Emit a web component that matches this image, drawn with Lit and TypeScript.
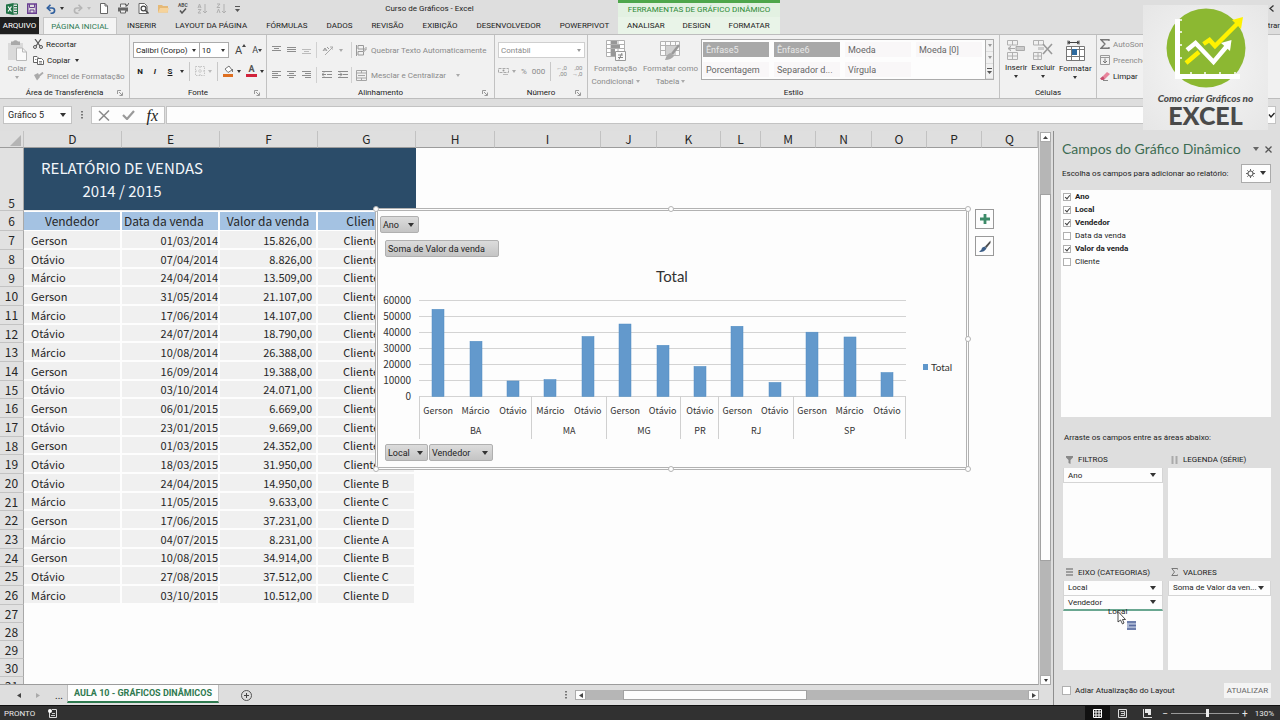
import { LitElement, html, svg, css, nothing } from "lit";
import { customElement } from "lit/decorators.js";
import { classMap } from "lit/directives/class-map.js";

const sellers = "Gerson Otávio Márcio Gerson Márcio Otávio Márcio Gerson Otávio Gerson Otávio Gerson Otávio Otávio Márcio Gerson Márcio Gerson Otávio Márcio".split(" ");
const dates = "01/03/2014 07/04/2014 24/04/2014 31/05/2014 17/06/2014 24/07/2014 10/08/2014 16/09/2014 03/10/2014 06/01/2015 23/01/2015 01/03/2015 18/03/2015 24/04/2015 11/05/2015 17/06/2015 04/07/2015 10/08/2015 27/08/2015 03/10/2015".split(" ");
const amounts = "15.826,00 8.826,00 13.509,00 21.107,00 14.107,00 18.790,00 26.388,00 19.388,00 24.071,00 6.669,00 9.669,00 24.352,00 31.950,00 14.950,00 9.633,00 37.231,00 8.231,00 34.914,00 37.512,00 10.512,00".split(" ");
const clients = "ABCDABCDABCDABCDABCD".split("");
clients.splice(12, 8, "A", "B", "C", "D", "A", "B", "C", "D");

const emptyRows = [27, 28, 29, 30, 31];
const columns = "DEFGHIJKLMNOPQ".split("");

const regions: [string, [string, number][]][] = [
  ["BA", [["Gerson", 54500], ["Márcio", 34500], ["Otávio", 9700]]],
  ["MA", [["Márcio", 10600], ["Otávio", 37500]]],
  ["MG", [["Gerson", 45300], ["Otávio", 32000]]],
  ["PR", [["Otávio", 18800]]],
  ["RJ", [["Gerson", 43900], ["Otávio", 8800]]],
  ["SP", [["Gerson", 40200], ["Márcio", 37200], ["Otávio", 15000]]],
];

const line = (y: number, a: number, b: number, c = "#8d8d8d") => svg`<path d="M${a} ${y}.5H${b}" stroke=${c}/>`;

const icon = (w: number, h: number, body: unknown) =>
  html`<svg class="ico" width=${w} height=${h} viewBox="0 0 ${w} ${h}" fill="none" aria-hidden="true">${body}</svg>`;

const caret = (c = "#333") => icon(6, 4, svg`<path d="M0 0H6L3 4Z" fill=${c}/>`);
const smallCaret = (c = "#333") => icon(4, 3, svg`<path d="M0 0H4L2 3Z" fill=${c}/>`);
const launcher = icon(6, 6, svg`<path d="M.5 4V.5H4M2 2L5 5M5.500 2.500V5.500H2.500" stroke="#999"/>`);

const icons = {
  excel: icon(12, 12, svg`<path d="M7 1H11.500V11H7" stroke="#217346"/><path d="M8 3.500H11M8 6H11M8 8.500H11" stroke="#217346"/><path d="M0 1.500L7.500 0V12L0 10.500Z" fill="#217346"/><path d="M2 3.500L5.500 8.500M5.500 3.500L2 8.500" stroke="#fff" stroke-width="1.200"/>`),
  save: icon(10, 11, svg`<path d="M.75 1H9.250V10.250H.75Z" stroke="#6a3f92" stroke-width="1.500"/><path d="M2.500 1V4.500H7.500V1M3 10V7H7V10" stroke="#6a3f92"/>`),
  undo: icon(10, 10, svg`<path d="M1.500 4H6A2.500 2.500 0 0 1 6 9.200H4.500" stroke="#2f5f9e" stroke-width="1.600"/><path d="M4.500 .8L1.300 4L4.500 7" stroke="#2f5f9e" stroke-width="1.600"/>`),
  redo: icon(10, 10, svg`<path d="M8.500 4H4A2.500 2.500 0 0 0 4 9.200H5.500" stroke="#b5b5b5" stroke-width="1.600"/><path d="M5.500 .8L8.700 4L5.500 7" stroke="#b5b5b5" stroke-width="1.600"/>`),
  page: icon(8, 11, svg`<path d="M.5 .5H5L7.500 3V10.500H.5Z" fill="#fff" stroke="#666"/><path d="M5 .5V3H7.500" stroke="#666"/>`),
  printer: icon(12, 11, svg`<path d="M1 4.500H11V8.500H1Z" fill="#666"/><path d="M3.500 4V1H9V4M3.500 7.500V10H8.500V7.500" fill="#eee" stroke="#666"/><path d="M8 1L10 3L12 0" stroke="#555"/>`),
  preview: icon(11, 11, svg`<path d="M1 .5H6.500L9 3V10.500H1Z" fill="#fff" stroke="#666"/><circle cx="5.500" cy="5.500" r="2.400" stroke="#444" stroke-width="1.200"/><path d="M7.500 7.500L10.500 10.500" stroke="#444" stroke-width="1.400"/>`),
  folder: icon(11, 9, svg`<path d="M0 1H4L5 2H10V8.500H0Z" fill="#e5b977"/><path d="M2 4H11L9.500 8.500H0Z" fill="#f6d39b"/>`),
  spell: html`<span class="abc">ABC${icon(8, 6, svg`<path d="M1 2.500L3 5L7 .5" stroke="#555" stroke-width="1.500"/>`)}</span>`,
  sortAsc: icon(10, 11, svg`<path d="M1 5L2.500 1L4 5M1.500 4H3.500M1 6.500H4L1 10H4M8 1V10M6 8L8 10L10 8" stroke="#b0b0b0"/>`),
  sortDesc: icon(10, 11, svg`<path d="M1 1H4L1 4.500H4M1 10L2.500 6L4 10M8 1V10M6 8L8 10L10 8" stroke="#b0b0b0"/>`),
  more: icon(5, 6, svg`<path d="M0 .5H5" stroke="#555"/><path d="M0 3H5L2.500 6Z" fill="#555"/>`),
  paste: icon(20, 21, svg`<path d="M1 3H16V20H1Z" fill="#dadada"/><path d="M4 1.500H6Q8.500 -1 11 1.500H13V5H4Z" fill="#a9a9a9"/><path d="M9.500 8H15.500L19.500 12V20.500H9.500Z" fill="#fafafa" stroke="#b9b9b9"/><path d="M15.500 8V12H19.500" stroke="#b9b9b9"/>`),
  cut: icon(10, 10, svg`<path d="M2 0L7 7M8 0L3 7" stroke="#555" stroke-width="1.200"/><circle cx="2" cy="8" r="1.500" stroke="#555"/><circle cx="8" cy="8" r="1.500" stroke="#555"/>`),
  copy: icon(11, 9, svg`<path d="M.5 .5H4L5.500 2V6.500H.5Z" fill="#fff" stroke="#666"/><path d="M4.500 2.500H8.500L10.500 4.500V8.500H4.500Z" fill="#fff" stroke="#666"/><path d="M6 5.500H9M6 7H9M2 3.500H3.500" stroke="#888"/>`),
  painter: icon(11, 9, svg`<path d="M1 3L5 1L7 5L4 8.500Z" fill="#aaa"/><path d="M6 4L10 .5" stroke="#aaa" stroke-width="1.800"/>`),
  fontUp: html`<span class="fa">A${icon(4, 3, svg`<path d="M0 3L2 0L4 3Z" fill="#444"/>`)}</span>`,
  fontDown: html`<span class="fa small">A${icon(4, 3, svg`<path d="M0 0L2 3L4 0Z" fill="#444"/>`)}</span>`,
  border: icon(10, 10, svg`<path d="M.5 .5H9.500V9.500H.5ZM5 .5V9.500M.5 5H9.500" stroke="#c4c4c4" stroke-dasharray="1.500 1"/>`),
  fill: icon(11, 12, svg`<path d="M2 4L6 1L9 5L5 7.500Z" fill="#fff" stroke="#777"/><path d="M9.500 4V7" stroke="#777"/><path d="M0 9H10V12H0Z" fill="#de6f20"/>`),
  color: html`<span class="fc">A</span>`,
  top: icon(9, 8, svg`${line(0, 0, 9)}${line(2, 2, 7)}${line(4, 0, 9)}`),
  mid: icon(9, 8, svg`${line(1, 0, 9)}${line(3, 0, 9)}${line(5, 0, 9)}`),
  bot: icon(9, 8, svg`${line(3, 0, 9, "#bbb")}${line(5, 2, 7, "#bbb")}${line(7, 0, 9, "#bbb")}`),
  left: icon(9, 8, svg`${line(0, 0, 9)}${line(2, 0, 6)}${line(4, 0, 9)}${line(6, 0, 6)}`),
  center: icon(9, 8, svg`${line(0, 0, 9)}${line(2, 2, 7)}${line(4, 0, 9)}${line(6, 2, 7)}`),
  right: icon(9, 8, svg`${line(0, 0, 9)}${line(2, 3, 9)}${line(4, 0, 9)}${line(6, 3, 9)}`),
  orient: icon(11, 9, svg`<path d="M3 9L11 1M8 1H11V4" stroke="#aaa"/><path d="M1 5L3 2L5 5M2 4H4.500M5 1L7 3" stroke="#999"/>`),
  outdent: icon(10, 8, svg`${line(0, 0, 10)}${line(3, 5, 10)}${line(6, 0, 10)}<path d="M4 3.500H0M2 1.500L0 3.500L2 5.500" stroke="#888"/>`),
  indent: icon(10, 8, svg`${line(0, 0, 10)}${line(3, 5, 10)}${line(6, 0, 10)}<path d="M0 3.500H4M2 1.500L4 3.500L2 5.500" stroke="#888"/>`),
  wrap: icon(11, 11, svg`<path d="M.5 0V11M2 .5H7.500V4H2ZM2 6.500H7.500V10H2Z" stroke="#999"/><path d="M7 5H10V2M8.500 3.500L7 5L8.500 6.500" stroke="#999"/>`),
  merge: icon(11, 11, svg`<path d="M.5 .5H10.500V10.500H.5ZM.5 3H10.500M.5 8H10.500M5.500 .5V3M5.500 8V10.500M2 5.500H9" stroke="#a5a5a5"/>`),
  money: icon(11, 9, svg`<path d="M.5 1.500H10.500V5.500H.5Z" stroke="#aaa" stroke-dasharray="3 1"/><circle cx="5.500" cy="3.500" r="1" fill="#999"/><path d="M5 7.500H10" stroke="#bbb"/>`),
  condFmt: icon(20, 21, svg`<path d="M.5 .5H18.500V16.500H.5ZM.5 4.500H18.500M.5 8.500H18.500M.5 12.500H18.500M5 .5V16.500M12 .5V16.500" fill="#fff" stroke="#b0b0b0"/><path d="M5 1H11V4H5ZM5 5H14V8H5ZM5 9H9V16H5Z" fill="#979797"/><path d="M9.500 11.500H19.500V20.500H9.500Z" fill="#fafafa" stroke="#999"/><path d="M12 15H17M12 17.500H17M16 13L13 19.500" stroke="#888"/>`),
  tableFmt: icon(21, 21, svg`<path d="M.5 1.500H19.500V15.500H.5ZM.5 5.500H19.500M.5 10.500H19.500M5.500 1.500V15.500M10.500 1.500V15.500M15.500 1.500V15.500" fill="#fafafa" stroke="#b3b3b3"/><path d="M6 6H16V15H6Z" fill="#d0d0d0"/><path d="M19 5L12 14" stroke="#999" stroke-width="2.500"/><path d="M5 20Q7 13 11 13L14 16Q11 20 5 20Z" fill="#a8a8a8"/>`),
  insert: icon(18, 20, svg`<path d="M.5 .5H10.500V5H.5ZM5.500 .5V5M.5 12.500H10.500V19.500H.5ZM5.500 12.500V19.500M.5 16H10.500" stroke="#b0b0b0"/><path d="M9 6.500H17.500V10.500H9ZM8 8.500H1M4 6L1 8.500L4 11" fill="#ccc" stroke="#aaa"/>`),
  remove: icon(20, 20, svg`<path d="M.5 .5H10.500V5H.5ZM5.500 .5V5M.5 12.500H8.500V19.500H.5ZM5 12.500V19.500M.5 16H8.500" stroke="#b0b0b0"/><path d="M5 7H11V10H5Z" fill="#ccc"/><path d="M10 4L19 14M19 4L10 14" stroke="#999" stroke-width="1.600"/>`),
  format: icon(19, 21, svg`<path d="M2 2.500H13M2 .5V4.500M13 .5V4.500M4 1L2 2.500L4 4M11 1L13 2.500L11 4" stroke="#444"/><path d="M.5 6.500H18.500V20.500H.5ZM5.500 6.500V20.500M13.500 6.500V20.500M.5 9.500H18.500M.5 16.500H18.500" fill="#fff" stroke="#777"/><path d="M6 9H11V15H6Z" fill="#2d6a9f"/>`),
  sum: icon(10, 10, svg`<path d="M9 2V.75H1L5 5L1 9.250H9V8" stroke="#777" stroke-width="1.300"/>`),
  down: icon(10, 10, svg`<path d="M.5 .5H9.500V9.500H.5ZM.5 2.500H9.500" stroke="#999"/><path d="M5 3.500V8M3 6L5 8L7 6" stroke="#777"/>`),
  eraser: icon(10, 9, svg`<path d="M3 4L7 0L10 2L5 7Z" fill="#e8839b"/><path d="M3 4L5 7L3.500 8H1.500L0 6.500Z" fill="#c84d6e"/><path d="M3 8.500H8" stroke="#888"/>`),
  cancel: icon(12, 11, svg`<path d="M1 1L11 10.500M11 .5L1 10.500" stroke="#8a8a8a" stroke-width="1.500"/>`),
  accept: icon(13, 10, svg`<path d="M1 5L5 9L12 1" stroke="#9a9a9a" stroke-width="2.200"/>`),
  gear: icon(9, 9, svg`<circle cx="4.500" cy="4.500" r="2.500" stroke="#666" stroke-width="1.200"/><path d="M4.500 0V2M4.500 7V9M0 4.500H2M7 4.500H9M1.300 1.300L2.600 2.600M6.400 6.400L7.700 7.700M7.700 1.300L6.400 2.600M2.600 6.400L1.300 7.700" stroke="#666"/>`),
  funnel: icon(7, 8, svg`<path d="M0 0H7V1.500L4.500 4V8L2.500 7V4L0 1.500Z" fill="#888"/>`),
  cols: icon(7, 8, svg`<path d="M1.500 0V8M5.500 0V8" stroke="#aaa" stroke-width="2"/>`),
  rows: icon(7, 8, svg`<path d="M0 1H7M0 4H7M0 7H7" stroke="#888" stroke-width="1.500"/>`),
  sigma: icon(7, 8, svg`<path d="M6.500 1.500V.5H.8L3.500 4L.8 7.500H6.500V6.500" stroke="#777"/>`),
  plus: icon(10, 10, svg`<path d="M5 0V10M0 5H10" stroke="#3c8a68" stroke-width="2.800"/>`),
  brush: icon(12, 13, svg`<path d="M11.500 .5L6 6.500L7.500 8L11.500 3Z" fill="#4d4d4d"/><path d="M6 6.500Q2.500 7 2.500 9.500L0 12Q5 12.500 7.500 8.500Z" fill="#3b5d86"/>`),
  normal: icon(9, 9, svg`<path d="M.5 .5H8.500V8.500H.5ZM.5 3H8.500M.5 6H8.500M3 .5V8.500M6 .5V8.500" stroke="#fff"/>`),
  layout: icon(9, 9, svg`<path d="M.5 .5H8.500V8.500H.5Z" stroke="#ddd"/><path d="M2.500 2.500H6.500V6.500H2.500M3 4.500H6" stroke="#ccc"/>`),
  pageBreak: icon(9, 9, svg`<path d="M.5 0V8.500H9" stroke="#ddd"/><path d="M2 0H8V6H5V4H2Z" fill="#e8e8e8"/>`),
  record: icon(9, 9, svg`<path d="M1.500 3V8.500H8.500V.5H4" stroke="#ddd"/><path d="M4 4.500H7M3 6.500H7" stroke="#ccc"/><circle cx="2" cy="2" r="2" fill="#fff"/>`),
};

@customElement("pivot-chart")
class PivotChart extends LitElement {
  static styles = css`
    :host { display: flex; flex-direction: column; background: #fdfdfd; border: 3px double #b2b2b2; box-sizing: border-box;
      font-family: Lato, sans-serif; color: #333; }
    button { display: flex; align-items: center; justify-content: space-between; height: 17px; box-sizing: border-box; padding: 0 4px 0 2px;
      border: 1px solid #b0b0b0; border-radius: 2px; background: linear-gradient(#dcdcdc, #c4c4c4); font: 9px Roboto, sans-serif; color: #222; }
    .ano { width: 39px; margin: 5px 0 0 2px; }
    .soma { width: 114px; margin: 7px 0 0 7px; }
    h2 { margin: 7px 0 0; font-size: 15px; line-height: 24px; font-weight: 400; text-align: center; }
    .body { display: flex; align-items: center; margin: 5px 0 0 1px; }
    .legend { display: flex; align-items: center; gap: 3px; margin-left: 12px; font-size: 10px; }
    .swatch { width: 5px; height: 6px; background: #5f97cb; }
    .foot { display: flex; gap: 1px; margin: 4px 0 0 7px; }
    .local { width: 43px; }
    .vend { width: 64px; }
    .plot { display: block; }
    .tick { font: 10px "Noto Sans CJK SC", sans-serif; fill: #333; text-anchor: end; }
    .name { font: 9px "Noto Sans CJK SC", sans-serif; fill: #333; text-anchor: middle; }
  `;
  render() {
    const step = 37.4, x0 = 40.5, base = 103.5, scale = 16 / 10000;
    let i = 0;
    const parts = regions.map(([region, bars]) => {
      const start = x0 + i * step;
      const mid = start + (bars.length * step) / 2;
      const out = bars.map(([name, v]) => {
        const cx = x0 + (i + 0.5) * step;
        i++;
        return svg`<rect x=${Math.round(cx) - 6} y=${base - v * scale} width="12" height=${v * scale} fill="#6399cc" stroke="#4f8bc2" stroke-width=".5"/>
          <text class="name" x=${cx} y="121">${name}</text>`;
      });
      return svg`<path d="M${Math.round(start) - 0.5} 103V146" stroke="#d0d0d0"/>${out}<text class="name" x=${mid} y="141">${region}</text>`;
    });
    return html`
      <button class="ano">Ano ${caret()}</button>
      <button class="soma">Soma de Valor da venda</button>
      <h2>Total</h2>
      <div class="body">
        <svg class="plot" width="532" height="147" viewBox="0 0 532 147" role="img" aria-label="Total">
          ${[0, 1, 2, 3, 4, 5, 6].map((k) => svg`<path d="M40 ${base - k * 16}H527" stroke="#d3d3d3"/>
            <text class="tick" x="32" y=${base + 3.5 - k * 16}>${k * 10000}</text>`)}
          ${parts}<path d="M526.500 103V146" stroke="#d0d0d0"/>
        </svg>
        <div class="legend"><span class="swatch"></span>Total</div>
      </div>
      <div class="foot"><button class="local">Local ${caret()}</button><button class="vend">Vendedor ${caret()}</button></div>`;
  }
}

@customElement("app-root")
class AppRoot extends LitElement {
  static styles = css`
    :host { display: flex; flex-direction: column; position: relative; height: 100vh; min-height: 480px; overflow: hidden; background: #dedede;
      font: 8px Roboto, "Liberation Sans", sans-serif; color: #1c1c1c; cursor: default; }
    * { box-sizing: border-box; }
    button, select, input { margin: 0; padding: 0; border: 0; border-radius: 0; background: none; font: inherit; color: inherit; }
    button { display: flex; align-items: center; white-space: nowrap; }
    select { appearance: none; }
    a { color: inherit; text-decoration: none; }
    .ico { display: block; flex: none; }
    .grow { flex: 1; }
    .dim, .dim button { color: #8a8a8a; }

    .title { display: grid; grid-template-columns: 618px 162px 1fr; height: 17px; position: relative; }
    .quick { display: flex; align-items: center; gap: 9px; padding-left: 6px; }
    .quick button { gap: 4px; }
    .abc { display: flex; flex-direction: column; align-items: center; font: bold 5px/5px Roboto, sans-serif; color: #555; }
    .doc { flex: 1; text-align: center; padding-right: 8px; }
    .doc h1 { margin: 0; font: inherit; }
    .context { border-top: 3px solid #4ea64b; background: #e3f1e2; color: #2c8a35; text-align: center; line-height: 13px; }
    .user { display: flex; justify-content: flex-end; align-items: center; padding-right: 6px; }

    .tabs { display: flex; height: 17px; }
    .tabs button { flex: none; justify-content: center; padding: 0 9px; }
    .tabs .file { width: 39px; padding: 0; margin-right: 3px; background: #1f1f1f; color: #fff; }
    .tabs .active { width: 74px; padding: 0; border: 1px solid #c6c6c6; border-bottom: 0; background: #f4f4f4; color: #2c7a52; }
    .tabs .ctx { display: flex; width: 162px; background: #e9f4e8; }
    .tabs .left { flex: none; display: flex; gap: 1px; width: 618px; }
    .entrar { flex: 1; display: flex; justify-content: flex-end; align-items: center; }

    .ribbon { display: flex; height: 65px; flex: none; border: 1px solid #bdbdbd; border-width: 1px 0; background: #f1f1f1; }
    .group { flex: none; display: flex; flex-direction: column; border-right: 1px solid #c2c2c2; }
    .group .pane { display: flex; height: 52px; }
    .group footer { display: grid; grid-template-columns: 12px 1fr 12px; align-items: center; height: 11px; text-align: center; }
    .group footer span { grid-column: 2; }
    .g-clip { width: 130px; } .g-font { width: 137px; } .g-align { width: 228px; } .g-num { width: 93px; }
    .g-style { width: 412px; } .g-cells { width: 97px; } .g-edit { width: 184px; border: 0; }
    .g-cells .pane { gap: 4px; padding-left: 5px; }
    .stack { display: flex; flex-direction: column; padding: 1px 0 0 3px; }
    .stack button { height: 16px; gap: 3px; }
    .big { flex-direction: column; gap: 2px; padding: 5px 0 0; line-height: 11px; }
    .colar { width: 30px; padding-left: 4px; }
    .lines { display: flex; flex-direction: column; gap: 5px; width: 100%; padding: 7px 4px 0 3px; }
    .bar { display: flex; align-items: center; height: 16px; gap: 6px; }
    .bar button { gap: 3px; }
    .bar.tight { gap: 5px; }
    .sep { flex: none; width: 1px; height: 19px; background: #c8c8c8; }
    .combo { display: flex; align-items: center; height: 16px; padding: 0 3px 0 2px; border: 1px solid #ababab; background: #fff; }
    .combo select { flex: 1; min-width: 0; }
    .combo.name { width: 71px; } .combo.size { width: 32px; margin-left: -7px; }
    .combo.fmt { width: 87px; border-color: #cfcfcf; color: #8a8a8a; }
    .fmtrow { gap: 5px; padding: 0 2px; }
    .fmtrow .ltr { min-width: 10px; justify-content: center; }
    .b { font-weight: 700; } .i { font-style: italic; font-weight: 700; } .u { text-decoration: underline; font-weight: 700; }
    .fa { display: flex; font: 11px Roboto, sans-serif; color: #444; }
    .fa.small { font-size: 9px; align-items: center; }
    .fc { font: bold 9px/9px Roboto, sans-serif; width: 11px; border-bottom: 3px solid #d2233c; text-align: center; color: #555; }
    .dec { font: 6px/6px Roboto, sans-serif; text-align: right; }
    .al { display: grid; grid-template-columns: 45px 35px 1fr; row-gap: 5px; width: 100%; padding: 7px 0 0 5px; }
    .al > div { display: flex; align-items: center; gap: 6px; height: 16px; border-right: 1px solid #d0d0d0; }
    .al > div + div { padding-left: 5px; }
    .al > div:nth-child(4) { padding-left: 0; }
    .al > div.last { border: 0; padding-left: 4px; gap: 4px; }
    .al button { gap: 4px; }

    .w55 { width: 55px; }
    .row { display: flex; align-items: center; gap: 2px; }
    .gallery { display: grid; grid-template-columns: repeat(4, 66px); gap: 5px; padding: 2px 1px; border: 1px solid #ababab; border-right: 0; height: 41px; margin: 4px 0 0 3px; background: #fdfdfd; width: 284px; }
    .gallery button { height: 15px; padding: 0 3px; font-size: 9px; color: #666; background: #f9f7f8; }
    .gallery .sel { background: #a8a8a8; color: #e8e8e8; }
    .spin { display: grid; width: 9px; height: 41px; margin-top: 4px; border: 1px solid #ababab; }
    .spin button { justify-content: center; border-bottom: 1px solid #ddd; }

    .formula { display: flex; height: 32px; flex: none; padding: 7px 4px 7px 3px; }
    .box { display: flex; align-items: center; border: 1px solid #c3c3c3; background: #fdfdfd; }
    .namebox { width: 69px; padding: 0 5px 0 4px; font-size: 9px; }
    .namebox input { flex: 1; min-width: 0; }
    .dots { display: flex; align-items: center; justify-content: center; width: 19px; }
    .fxbox { width: 74px; justify-content: space-between; padding: 0 6px; }
    .fx { font: italic 16px/15px "Liberation Serif", serif; color: #222; }
    .fbox { flex: 1; margin-left: 1px; padding: 0 0 0 4px; }
    .fbox input { flex: 1; height: 16px; }

    .main { display: flex; flex: 1; min-height: 0; }
    .sheet { flex: 1; min-width: 0; display: flex; flex-direction: column; }
    .view { flex: 1; min-height: 0; display: flex; }
    .grid { flex: 1; min-width: 0; position: relative; overflow: hidden; background: #fdfdfd; border-bottom: 1px solid #9c9c9c; border-right: 1px solid #b5b5b5; }
    table { width: 100%; table-layout: fixed; border-collapse: separate; border-spacing: 0; font: 11px/14px "Noto Sans CJK SC", "Liberation Sans", sans-serif; color: #262626; }
    th, td { padding: 0; font-weight: 400; overflow: hidden; white-space: nowrap; }
    thead th { height: 17px; background: #dfdfdf; border-bottom: 1px solid #9c9c9c; border-right: 1px solid #c2c2c2; font-size: 12px; }
    tbody th[scope="row"] { height: 19px; background: #e1e1e1; border-right: 1px solid #a8a8a8; border-bottom: 1px solid #c3c3c3; font-size: 12px; }
    tbody tr.short th[scope="row"] { height: 18px; }
    tbody tr.banner th[scope="row"] { height: 63px; vertical-align: bottom; }
    tbody tr.head th[scope="row"] { height: 20px; }
    .banner .blue { background: #2b4c69; color: #f2f6fa; font-size: 15px; line-height: 23px; border-bottom: 1px solid #eee; text-align: center; }
    .head .h { background: #a4c2e2; border: 1px solid #fff; border-width: 1px 2px 1px 0; font-size: 12px; text-align: center; }
    .head .e { text-align: left; padding-left: 2px; }
    .cell { background: #f0f0f0; border: 1px solid #fdfdfd; border-width: 0 2px 2px 0; }
    .r { text-align: right; }
    .v { padding-left: 7px; }
    .f { padding-right: 4px; }
    .c { text-align: center; }
    pivot-chart { position: absolute; left: 375px; top: 77px; width: 594px; height: 262px; }
    .handle { position: absolute; width: 6px; height: 6px; border: 1px solid #b5b5b5; border-radius: 3px; background: #fff; }
    .tm { left: 668px; top: 75px; } .bm { left: 668px; top: 335px; } .rm { left: 965px; top: 205px; }
    .tr { left: 965px; top: 75px; } .br { left: 965px; top: 335px; } .tl { left: 373px; top: 75px; } .bl { left: 373px; top: 335px; }
    .side { position: absolute; left: 975px; top: 78px; display: flex; flex-direction: column; gap: 7px; }
    .side button { width: 19px; height: 20px; justify-content: center; border: 1px solid #999; background: #fdfdfd; }

    .vscroll { display: flex; flex-direction: column; width: 14px; padding: 1px 2px 0 1px; }
    .vscroll button, .hscroll button { justify-content: center; width: 11px; height: 10px; border: 1px solid #ababab; background: #fdfdfd; }
    .vtrack { flex: 1; display: flex; flex-direction: column; width: 11px; background: #b6b6b6; padding: 52px 0 114px; }
    .thumb { flex: 1; border: 1px solid #a2a2a2; background: #fdfdfd; }

    .sheets { display: flex; height: 20px; flex: none; align-items: center; padding-right: 14px; }
    .nav { display: flex; align-items: center; gap: 15px; width: 67px; padding-left: 17px; }
    .nav b { font-size: 10px; font-weight: 400; }
    .tab { align-self: flex-start; justify-content: center; width: 152px; height: 18px; border: 1px solid #c0c0c0; border-width: 0 1px 2px; border-bottom-color: #2f7a50; background: #fdfdfd; color: #2f7a50; font: bold 9px Roboto, sans-serif; }
    .add { margin-left: 22px; }
    .hscroll { display: flex; width: 464px; }
    .htrack { flex: 1; display: flex; height: 10px; background: #b6b6b6; padding: 0 221px 0 37px; }

    .panel { display: flex; flex-direction: column; width: 227px; flex: none; border-left: 1px solid #8e8e8e; padding: 8px 9px 7px 8px; background: #dedede; }
    .phead { display: flex; gap: 6px; align-items: center; height: 20px; margin-right: -1px; }
    .phead h2 { flex: 1; margin: 0; font: 14px/20px Lato, sans-serif; color: #3c6b52; white-space: nowrap; }
    .choose { display: flex; align-items: center; justify-content: space-between; height: 20px; margin: 4px 0 7px; }
    .choose button { width: 30px; height: 19px; justify-content: center; gap: 5px; border: 1px solid #ababab; background: #fdfdfd; }
    .fields { flex: none; height: 227px; margin: 0 0 16px -1px; padding-left: 2px; background: #fdfdfd; border: 0; }
    .fields label, .defer { display: flex; align-items: center; gap: 4px; height: 13px; }
    .fields .on { font-weight: 700; }
    input[type="checkbox"] { appearance: none; display: grid; place-items: center; width: 8px; height: 8px; border: 1px solid #b0b0b0; background: #fff; }
    input[type="checkbox"]:checked::after { content: ""; width: 2px; height: 4px; border: solid #444; border-width: 0 1px 1px 0; transform: rotate(40deg); }
    .hint { padding-left: 2px; }
    .areas { display: grid; grid-template-columns: 100px 1fr; grid-template-rows: 1fr 1fr; column-gap: 5px; row-gap: 6px; margin: 9px 0 0 1px; position: relative; flex: 1; }
    .area { display: flex; flex-direction: column; }
    .area h3 { display: flex; align-items: center; gap: 5px; margin: 0; padding-left: 3px; height: 17px; font: inherit; }
    .drop { flex: 1; background: #fdfdfd; }
    .drop button { justify-content: space-between; width: 100%; height: 15px; padding: 0 6px 0 4px; border: 1px solid #d5d5d5; border-top: 0; }
    .drop button.mark { border-bottom: 2px solid #6aa791; }
    .ghost { position: absolute; left: 45px; top: 156px; }
    .cursor { position: absolute; left: 54px; top: 160px; }
    .pfoot { display: flex; align-items: center; justify-content: space-between; height: 15px; margin-top: 13px; }
    .pfoot input[type="checkbox"] { width: 9px; height: 9px; }
    .pfoot button { width: 47px; height: 15px; justify-content: center; background: #f4f4f4; color: #666; }

    .status { display: flex; align-items: center; height: 15px; flex: none; padding: 0 6px 0 4px; border-top: 1px solid #111; background: #313131; color: #e8e8e8; }
    .status .rec { margin-left: 13px; }
    .status .vw { width: 25px; height: 14px; justify-content: center; }
    .status .cur { background: #111; }
    .zoom { display: flex; align-items: center; gap: 3px; margin: 0 7px 0 2px; font-size: 10px; }
    .zoom input { appearance: none; width: 68px; height: 10px; background: linear-gradient(#999, #999) center / 100% 1px no-repeat; }
    .zoom input::-webkit-slider-thumb { appearance: none; width: 3px; height: 8px; background: #eee; }

    .brand { position: absolute; right: 12px; top: 5px; width: 125px; height: 125px; display: flex; flex-direction: column; align-items: center; padding-top: 3px;
      background: radial-gradient(#f6f6f6, #e6e6e6); color: #4a4a4a; font-family: Lato, sans-serif; }
    .brand em { font-size: 10px; line-height: 12px; font-weight: 900; margin-top: 4px; white-space: nowrap; }
    .brand strong { font-size: 25px; line-height: 22px; font-weight: 900; }
  `;

  private group(cls: string, label: string, body: unknown, launch = true) {
    return html`<section class="group ${cls}"><div class="pane">${body}</div><footer><span>${label}</span>${launch ? launcher : nothing}</footer></section>`;
  }

  private ribbon() {
    return html`<div class="ribbon">
      ${this.group("g-clip", "Área de Transferência", html`
        <button class="big colar dim">${icons.paste}Colar${smallCaret("#aaa")}</button>
        <div class="stack"><button>${icons.cut}Recortar</button><button>${icons.copy}Copiar&nbsp;${smallCaret()}</button><button class="dim">${icons.painter}Pincel de Formatação</button></div>`)}
      ${this.group("g-font", "Fonte", html`<div class="lines">
        <div class="bar"><span class="combo name"><select aria-label="Fonte"><option>Calibri (Corpo)</option></select>${smallCaret()}</span>
          <span class="combo size"><select aria-label="Tamanho"><option>10</option></select>${smallCaret()}</span>
          <button>${icons.fontUp}</button><button>${icons.fontDown}</button></div>
        <div class="bar fmtrow"><button class="ltr b">N</button><button class="ltr i">I</button><button class="ltr"><span class="u">S</span></button>${smallCaret()}
          <span class="sep"></span><button>${icons.border}${smallCaret("#bbb")}</button>
          <span class="sep"></span><button>${icons.fill}${smallCaret()}</button><button>${icons.color}${smallCaret()}</button></div></div>`)}
      ${this.group("g-align", "Alinhamento", html`<div class="al">
        <div>${icons.top}${icons.mid}${icons.bot}</div><div>${icons.orient}${smallCaret("#aaa")}</div>
        <div class="last dim"><button>${icons.wrap}Quebrar Texto Automaticamente</button></div>
        <div>${icons.left}${icons.center}${icons.right}</div><div>${icons.outdent}${icons.indent}</div>
        <div class="last dim"><button>${icons.merge}Mesclar e Centralizar&nbsp;&nbsp;&nbsp;${smallCaret("#aaa")}</button></div></div>`)}
      ${this.group("g-num", "Número", html`<div class="lines">
        <span class="combo fmt"><select aria-label="Formato"><option>Contábil</option></select>${smallCaret("#999")}</span>
        <div class="bar tight dim"><button>${icons.money}${smallCaret("#aaa")}</button><button>%</button><button>000</button><span class="sep"></span><button class="dec">←,0<br>,00</button><button class="dec">,00<br>→,0</button></div></div>`)}
      ${this.group("g-style", "Estilo", html`
        <button class="big w55 dim">${icons.condFmt}<span>Formatação</span><span class="row">Condicional ${smallCaret("#aaa")}</span></button>
        <button class="big w55 dim">${icons.tableFmt}<span>Formatar como</span><span class="row">Tabela ${smallCaret("#aaa")}</span></button>
        <div class="gallery"><button class="sel">Ênfase5</button><button class="sel">Ênfase6</button><button>Moeda</button><button>Moeda [0]</button>
          <button>Porcentagem</button><button>Separador d...</button><button>Vírgula</button></div>
        <div class="spin"><button aria-label="Acima">${smallCaret("#999")}</button><button aria-label="Abaixo">${smallCaret("#999")}</button><button aria-label="Mais">${icons.more}</button></div>`, false)}
      ${this.group("g-cells", "Células", html`
        <button class="big">${icons.insert}Inserir${smallCaret()}</button><button class="big">${icons.remove}Excluir${smallCaret()}</button>
        <button class="big">${icons.format}Formatar${smallCaret()}</button>`, false)}
      ${this.group("g-edit", "Edição", html`<div class="stack"><button class="dim">${icons.sum}AutoSoma</button><button class="dim">${icons.down}Preencher</button><button>${icons.eraser}Limpar&nbsp;${smallCaret()}</button></div>`, false)}
    </div>`;
  }

  private rowsTpl() {
    return sellers.map((s, i) => html`<tr class=${classMap({ short: i % 3 === 2 })}><th scope="row">${i + 7}</th>
      <td class="cell v">${s}</td><td class="cell r">${dates[i]}</td><td class="cell r f">${amounts[i]}</td><td class="cell c">Cliente ${clients[i]}</td></tr>`);
  }

  private drop(ic: unknown, label: string, items: [string, boolean][]) {
    return html`<section class="area"><h3>${ic}${label}</h3><div class="drop">${items.map(([t, m]) => html`<button class=${classMap({ mark: m })}>${t}${caret()}</button>`)}</div></section>`;
  }

  render() {
    const widths = [24, 98, 98, 98, 98, 79, 106, 56, 64, 40, 55, 56, 55, 55];
    const fields: [string, boolean][] = [["Ano", true], ["Local", true], ["Vendedor", true], ["Data da venda", false], ["Valor da venda", true], ["Cliente", false]];
    return html`
      <header class="title">
        <div class="quick">${icons.excel}<button aria-label="Salvar">${icons.save}</button><button aria-label="Desfazer">${icons.undo}${smallCaret()}</button>
          <button aria-label="Refazer">${icons.redo}${smallCaret("#bbb")}</button><button aria-label="Novo">${icons.page}</button><button aria-label="Imprimir">${icons.printer}</button>
          <button aria-label="Visualizar">${icons.preview}</button><button aria-label="Abrir">${icons.folder}</button><button aria-label="Ortografia">${icons.spell}</button>
          <button aria-label="Crescente">${icons.sortAsc}</button><button aria-label="Decrescente">${icons.sortDesc}</button><button aria-label="Personalizar">${icons.more}</button>
          <div class="doc"><h1>Curso de Gráficos - Excel</h1></div></div>
        <div class="context">FERRAMENTAS DE GRÁFICO DINÂMICO</div>
        <div class="user">${icon(5, 7, svg`<path d="M4.500 .5L1 3.500L4.500 6.500" stroke="#333" stroke-width="1.300"/>`)}</div>
      </header>
      <nav class="tabs">
        <div class="left"><button class="file">ARQUIVO</button><button class="active">PÁGINA INICIAL</button>
          ${["INSERIR", "LAYOUT DA PÁGINA", "FÓRMULAS", "DADOS", "REVISÃO", "EXIBIÇÃO", "DESENVOLVEDOR", "POWERPIVOT"].map((t) => html`<button>${t}</button>`)}</div>
        <div class="ctx">${["ANALISAR", "DESIGN", "FORMATAR"].map((t) => html`<button>${t}</button>`)}</div>
        <div class="entrar"><a href="#">Entrar</a></div>
      </nav>
      ${this.ribbon()}
      <div class="formula">
        <div class="box namebox"><input aria-label="Caixa de nome" value="Gráfico 5">${caret()}</div>
        <div class="dots">${icon(2, 8, svg`<path d="M1 0V8" stroke="#555" stroke-width="1.500" stroke-dasharray="1.500 1.500"/>`)}</div>
        <div class="box fxbox"><button aria-label="Cancelar">${icons.cancel}</button><button aria-label="Inserir">${icons.accept}</button><button class="fx">fx</button></div>
        <div class="box fbox"><input aria-label="Barra de fórmulas">${icon(7, 6, svg`<path d="M1 2.500L3 5L6.500 1" stroke="#222" stroke-width="1.300"/>`)}</div>
      </div>
      <div class="main">
        <div class="sheet">
          <div class="view">
            <div class="grid">
              <table>
                <colgroup>${widths.map((w) => html`<col width=${w}>`)}<col></colgroup>
                <thead><tr><th aria-label="Selecionar tudo">${icon(22, 14, svg`<path d="M21 3V14H10Z" fill="#b4b4b4"/>`)}</th>${columns.map((c) => html`<th scope="col">${c}</th>`)}</tr></thead>
                <tbody>
                  <tr class="banner"><th scope="row">5</th><td class="blue" colspan="2">RELATÓRIO DE VENDAS<br>2014 / 2015</td><td class="blue"></td><td class="blue"></td></tr>
                  <tr class="head"><th scope="row">6</th><th class="h">Vendedor</th><th class="h e">Data da venda</th><th class="h">Valor da venda</th><th class="h">Cliente</th></tr>
                  ${this.rowsTpl()}
                  ${emptyRows.map((n) => html`<tr class="short"><th scope="row">${n}</th></tr>`)}
                </tbody>
              </table>
              <pivot-chart></pivot-chart>
              ${["tl", "tm", "tr", "rm", "bl", "bm", "br"].map((p) => html`<span class="handle ${p}"></span>`)}
              <div class="side"><button aria-label="Elementos do gráfico">${icons.plus}</button><button aria-label="Estilos de gráfico">${icons.brush}</button></div>
            </div>
            <div class="vscroll"><button aria-label="Acima">${icon(5, 3, svg`<path d="M0 3L2.500 0L5 3Z" fill="#444"/>`)}</button><div class="vtrack"><div class="thumb"></div></div>
              <button aria-label="Abaixo">${smallCaret()}</button></div>
          </div>
          <div class="sheets">
            <div class="nav">${icon(4, 5, svg`<path d="M4 0V5L0 2.500Z" fill="#444"/>`)}${icon(4, 5, svg`<path d="M0 0V5L4 2.500Z" fill="#aaa"/>`)}<b>...</b></div>
            <button class="tab">AULA 10 - GRÁFICOS DINÂMICOS</button>
            <button class="add" aria-label="Nova planilha">${icon(11, 11, svg`<circle cx="5.500" cy="5.500" r="5" stroke="#555"/><path d="M5.500 3V8M3 5.500H8" stroke="#444"/>`)}</button>
            <span class="grow"></span>
            <div class="dots">${icon(2, 8, svg`<path d="M1 0V8" stroke="#555" stroke-width="1.500" stroke-dasharray="1.500 1.500"/>`)}</div>
            <div class="hscroll"><button aria-label="Esquerda">${icon(4, 5, svg`<path d="M4 0V5L0 2.500Z" fill="#444"/>`)}</button><div class="htrack"><div class="thumb"></div></div>
              <button aria-label="Direita">${icon(4, 5, svg`<path d="M0 0V5L4 2.500Z" fill="#444"/>`)}</button></div>
          </div>
        </div>
        <aside class="panel">
          <div class="phead"><h2>Campos do Gráfico Dinâmico</h2>${caret("#666")}<button aria-label="Fechar">${icon(7, 7, svg`<path d="M.5 .5L6.500 6.500M6.500 .5L.5 6.500" stroke="#555" stroke-width="1.300"/>`)}</button></div>
          <div class="choose">Escolha os campos para adicionar ao relatório:<button aria-label="Ferramentas">${icons.gear}${caret()}</button></div>
          <div class="fields">${fields.map(([t, on]) => html`<label class=${classMap({ on })}><input type="checkbox" .checked=${on}>${t}</label>`)}</div>
          <div class="hint">Arraste os campos entre as áreas abaixo:</div>
          <div class="areas">
            ${this.drop(icons.funnel, "FILTROS", [["Ano", false]])}
            ${this.drop(icons.cols, "LEGENDA (SÉRIE)", [])}
            ${this.drop(icons.rows, "EIXO (CATEGORIAS)", [["Local", false], ["Vendedor", true]])}
            ${this.drop(icons.sigma, "VALORES", [["Soma de Valor da ven...", false]])}
            <span class="ghost">Local</span>
            <div class="cursor">${icon(22, 20, svg`<path d="M1 .5V11L3.500 9L5.500 13L7 12L5.500 8.500H8.500Z" fill="#fff" stroke="#222" stroke-width=".8"/><path d="M10 10H19V19H10Z" fill="#a9b6d3"/><path d="M10 11H19M12 14.500H19M10 18H19" stroke="#5b6da0" stroke-width="1.500"/>`)}</div>
          </div>
          <div class="pfoot"><label class="defer"><input type="checkbox">Adiar Atualização do Layout</label><button>ATUALIZAR</button></div>
        </aside>
      </div>
      <footer class="status">PRONTO<span class="rec">${icons.record}</span><span class="grow"></span>
        <button class="vw cur" aria-label="Normal">${icons.normal}</button><button class="vw" aria-label="Layout">${icons.layout}</button><button class="vw" aria-label="Quebra">${icons.pageBreak}</button>
        <div class="zoom">−<input type="range" aria-label="Zoom" min="0" max="100" value="54">+</div>130%</footer>
      <div class="brand">
        ${icon(84, 80, svg`<circle cx="42" cy="40" r="39.500" fill="#8cb832"/><path d="M13.500 11V68.500H76" stroke="#fff" stroke-width="5"/><path d="M13 12H18M13 24H18M13 37H18M13 50H18M27 64V68M41 64V68M56 64V68M71 64V68" stroke="#fff" stroke-width="1.500"/>
          <path d="M22 55L35 44M39.500 36L45.500 32L51 38L74 15" stroke="#fff200" stroke-width="4.500"/><path d="M68 12L79 9L77 21Z" fill="#fff200"/>
          <path d="M23 42L31.500 35L49.500 54L63 38" stroke="#fff" stroke-width="4.500"/><path d="M57 35L67.500 32L66 43Z" fill="#fff"/>`)}
        <em>Como criar Gráficos no</em><strong>EXCEL</strong>
      </div>`;
  }
}
